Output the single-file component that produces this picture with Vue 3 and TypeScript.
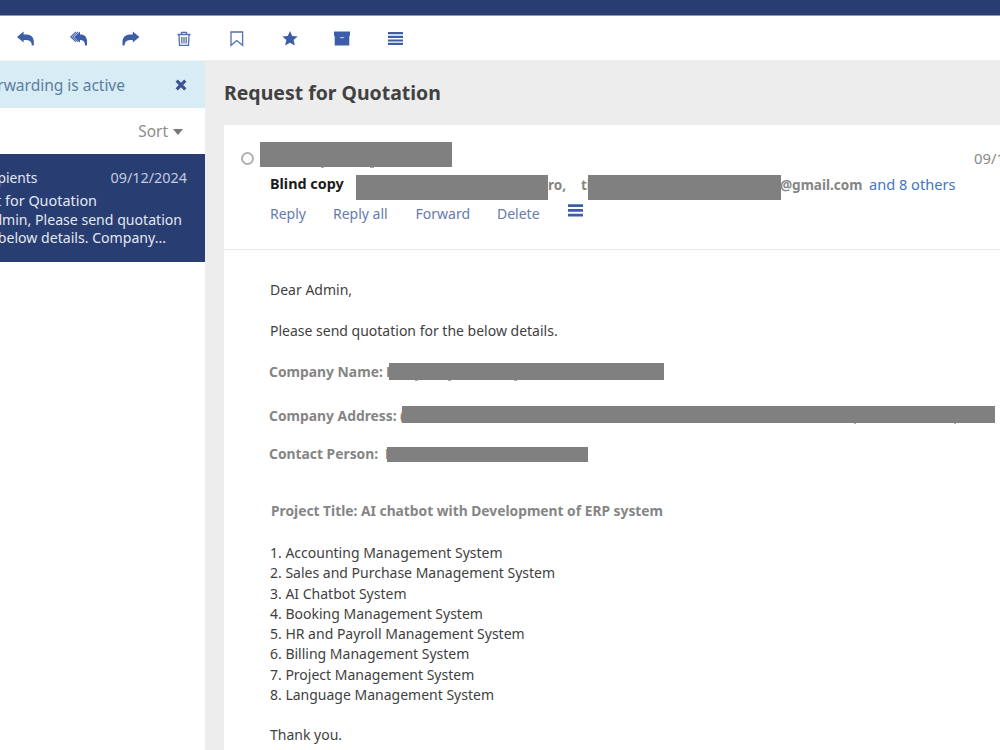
<script setup lang="ts">
interface Mark {
  left: number
  width: number
}

interface Field {
  label: string
  key: string
  peek: string
  marks: Mark[]
}

const fields: Field[] = [
  { label: 'Company Name:', key: 'name', peek: 'K', marks: [{ left: 26, width: 3 }, { left: 59, width: 3 }, { left: 125, width: 3 }] },
  { label: 'Company Address:', key: 'address', peek: '(', marks: [{ left: 452, width: 2 }, { left: 552, width: 2 }] },
  { label: 'Contact Person:', key: 'person', peek: 'D', marks: [] },
]

const systems: string[] = [
  'Accounting Management System',
  'Sales and Purchase Management System',
  'AI Chatbot System',
  'Booking Management System',
  'HR and Payroll Management System',
  'Billing Management System',
  'Project Management System',
  'Language Management System',
]
</script>

<template>
  <div class="mail">
    <div class="topbar"></div>
    <nav class="toolbar">
      <svg class="i-reply" viewBox="0 0 18 16"><path d="M0 5.9 6.6.4v3.1h3.2c5.6.3 7.9 4.3 6.9 11.1h-1.9c.1-3.5-1.8-5.6-5.3-5.7H6.6v2.5z" /></svg>
      <svg class="i-replyall" viewBox="0 0 18 16"><path d="M4.2 5.9 10 .4v3.1h1.2c4.7.3 6.7 4.3 5.7 11.1H15c.1-3.5-1.4-5.6-4.3-5.7H10v2.5z" /><path d="M6 .9.9 5.9 6 10.9M8.2.9 3 5.9l5.2 5" class="line" /></svg>
      <svg class="i-forward" viewBox="0 0 18 16"><path d="M17.4 5.9 10.8.4v3.1H7.6C2 3.8-.3 7.8.7 14.6h1.9c-.1-3.5 1.8-5.6 5.3-5.7h2.9v2.5z" /></svg>
      <svg class="i-trash" viewBox="0 0 14 16"><path class="line" d="M4.5 3V1.3h5V3M.5 3.5h13M2 3.6l.5 10.7h9L12 3.6M4.8 6v6.5M7 6v6.5M9.2 6v6.5" /></svg>
      <svg class="i-bookmark" viewBox="0 0 14 16"><path class="line" d="M1 1h11.6v13.3L6.8 9.6 1 14.3z" /></svg>
      <svg class="i-star" viewBox="0 0 16 16"><path d="m8 0 2.2 5 5.5.5-4.1 3.6 1.3 5.4L8 11.7l-4.9 2.8 1.3-5.4L.3 5.5 5.8 5z" /></svg>
      <svg class="i-archive" viewBox="0 0 16 16"><path d="M0 .5h16v4.2H0zM.7 4.5h14.6v10H.7z" /><path class="slot" d="M5.5 6h5L9.2 7.3H6.8z" /></svg>
      <svg class="i-menu" viewBox="0 0 15 14"><path d="M0 .1h15v2.2H0zM0 3.7h15v2.2H0zM0 7.4h15v2.2H0zM0 10.8h15v2.1H0z" /></svg>
    </nav>
    <div class="body">
      <aside class="list">
        <div class="notice">
          <span class="notice-text">Forwarding is active</span>
          <svg class="close" viewBox="0 0 12 12"><path d="m1.7 1.7 8.6 8.6M10.3 1.7l-8.6 8.6" /></svg>
        </div>
        <div class="sort"><span>Sort</span><i></i></div>
        <article class="item">
          <div class="item-head"><span class="who">Recipients</span><span class="when">09/12/2024</span></div>
          <div class="preview p1">Request for Quotation</div>
          <div class="preview p2">Dear Admin, Please send quotation</div>
          <div class="preview p3">for the below details. Company...</div>
        </article>
      </aside>
      <main class="reader">
        <h1><span>Request for Quotation</span></h1>
        <section class="message">
          <header>
            <div class="from">
              <span class="ring"></span>
              <span class="bar from-bar"><i class="mark" style="left: 61px; width: 3px"></i><i class="mark" style="left: 110px; width: 4px"></i></span>
              <time>09/12/2024</time>
            </div>
            <div class="copy">
              <b class="bcc">Blind copy</b>
              <span class="bar bar-a"></span>
              <b class="grey ro">ro,</b>
              <b class="grey tee">ti</b>
              <span class="bar bar-b"></span>
              <b class="grey domain">@gmail.com</b>
              <a class="others">and 8 others</a>
            </div>
            <div class="actions">
              <a class="a1">Reply</a><a class="a2">Reply all</a><a class="a3">Forward</a><a class="a4">Delete</a>
              <svg viewBox="0 0 15 13"><path d="M0 .2h15v2.7H0zM0 5h15v2.7H0zM0 9.8h15v2.7H0z" /></svg>
            </div>
          </header>
          <div class="content">
            <p class="dear"><span>Dear Admin,</span></p>
            <p class="please"><span>Please send quotation for the below details.</span></p>
            <div v-for="f in fields" :key="f.key" class="field" :class="f.key">
              <b class="label">{{ f.label }}</b>
              <b class="peek">{{ f.peek }}</b>
              <span class="bar"><i v-for="m in f.marks" :key="m.left" class="mark" :style="{ left: m.left + 'px', width: m.width + 'px' }"></i></span>
            </div>
            <p class="title"><b>Project Title: AI chatbot with Development of ERP system</b></p>
            <div class="systems">
              <div v-for="(s, n) in systems" :key="s"><span>{{ n + 1 }}. {{ s }}</span></div>
            </div>
            <p class="thanks"><span>Thank you.</span></p>
          </div>
        </section>
      </main>
    </div>
  </div>
</template>

<style>
body {
  margin: 0;
  overflow: hidden;
}
</style>

<style scoped>
.mail {
  width: 1000px;
  height: 750px;
  overflow: hidden;
  background: #fff;
  display: flex;
  flex-direction: column;
  font-family: "Noto Sans", "Open Sans", sans-serif;
  font-size: 14px;
  color: #333;
  white-space: nowrap;
}
.topbar {
  height: 15px;
  flex: none;
  background: #283e73;
  border-bottom: 1px solid #8d98b1;
}
.toolbar {
  height: 45px;
  flex: none;
  box-sizing: border-box;
  display: flex;
  align-items: flex-start;
  padding: 15px 0 0 17px;
  background: #fff;
  border-bottom: 1px solid #f3f3f3;
}
svg {
  display: block;
  flex: none;
  fill: #3c5da7;
}
.line {
  fill: none;
  stroke: #526fae;
  stroke-width: 1.3;
}
.i-reply, .i-replyall, .i-forward { width: 18px; height: 16px; }
.i-replyall { margin-left: 35px; }
.i-forward { margin-left: 34px; }
.i-trash { width: 14px; height: 16px; margin-left: 37px; }
.i-bookmark { width: 14px; height: 16px; margin-left: 39px; }
.i-star { width: 16px; height: 16px; margin-left: 38px; }
.i-archive { width: 16px; height: 16px; margin-left: 36px; }
.i-menu { width: 15px; height: 14px; margin: 1px 0 0 38px; }
.slot { fill: #b8c7e8; }
.body {
  flex: 1;
  min-height: 0;
  display: flex;
}
.list {
  width: 205px;
  flex: none;
  overflow: hidden;
}
.notice {
  height: 47px;
  box-sizing: border-box;
  padding-top: 1px;
  display: flex;
  align-items: center;
  justify-content: flex-end;
  background: #d8ecf6;
  color: #5b7f9c;
}
.notice-text { font-size: 15.6px; letter-spacing: -0.05px; margin-right: 50px; }
.close { width: 12px; height: 12px; margin-right: 18px; }
.close path { stroke: #3c5294; stroke-width: 3.2; }
.sort {
  height: 46px;
  box-sizing: border-box;
  padding-top: 1px;
  display: flex;
  align-items: center;
  justify-content: flex-end;
  padding-right: 22px;
  color: #8b8b8b;
  font-size: 15.4px;
}
.sort i {
  margin-left: 5px;
  border: 5px solid transparent;
  border-top: 6px solid #777;
  border-bottom: 0;
}
.item {
  height: 108px;
  box-sizing: border-box;
  background: #283e73;
  padding-top: 13px;
  color: #e3e7f1;
}
.item-head {
  display: flex;
  justify-content: flex-end;
  height: 23px;
  line-height: 22px;
}
.who { margin-right: 73px; font-size: 13.8px; }
.when { margin-right: 18px; color: #c2cadd; font-size: 14.4px; }
.preview {
  display: flex;
  justify-content: flex-end;
  height: 18.5px;
  line-height: 21px;
  font-size: 14.1px;
}
.p1 { padding-right: 108px; font-size: 14.4px; }
.p2 { padding-right: 23px; }
.p3 { padding-right: 39px; }
.reader {
  flex: 1;
  min-width: 0;
  margin-top: -1px;
  background: #ededed;
  padding-left: 19px;
  overflow: hidden;
}
h1 {
  margin: 0;
  height: 65px;
  line-height: 65px;
  font-size: 19.45px;
  color: #414141;
}
.message {
  background: #fff;
  height: 626px;
}
header {
  height: 125px;
  box-sizing: border-box;
  border-bottom: 1px solid #e7e7e7;
}
.bar {
  position: relative;
  display: block;
  flex: none;
  background: #808080;
}
.mark {
  position: absolute;
  bottom: -1px;
  height: 1px;
  background: #aaa;
}
.from {
  display: flex;
  height: 50px;
  padding-left: 17px;
}
.ring {
  width: 9px;
  height: 9px;
  border: 2px solid #b0b0b0;
  border-radius: 50%;
  flex: none;
  margin: 27px 0 0 0;
}
.from-bar { width: 192px; height: 25px; margin: 17px 522px 0 6px; }
time { line-height: 67px; font-size: 14.8px; color: #8a8a8a; }
.copy {
  display: flex;
  height: 25px;
  line-height: 17px;
  padding-left: 46px;
}
.bcc { width: 86px; flex: none; color: #1b1b1b; font-size: 14.4px; }
.grey { color: #858585; font-size: 13.5px; line-height: 20px; flex: none; }
.bar-a { width: 192px; height: 25px; }
.bar-b { width: 193px; height: 25px; }
.ro { width: 33px; }
.tee { width: 7px; overflow: hidden; }
.domain { width: 89px; margin-left: -1px; }
.others { color: #3f76cb; font-size: 14.6px; line-height: 19px; }
.actions {
  display: flex;
  padding-left: 46px;
  line-height: 27px;
  color: #667bae;
  font-size: 14px;
}
.a1 { width: 63px; }
.a2 { width: 82.5px; }
.a3 { width: 81.5px; }
.a4 { width: 71px; }
.actions svg { width: 15px; height: 13px; margin-top: 4px; }
.content {
  padding: 30px 0 0 46px;
  font-size: 14px;
  color: #3f3f3f;
}
p { margin: 0; height: 20px; line-height: 20px; }
.please { margin: 20px 0 21px; }
.please span { line-height: 21px; }
.field { display: flex; color: #858585; height: 20px; line-height: 22px; font-size: 13.85px; }
.label { flex: none; margin-left: -1px; }
.peek { width: 4px; flex: none; overflow: hidden; }
.name .label { width: 117px; }
.name .peek { width: 3px; }
.name .bar { width: 275px; height: 17px; margin-top: 2px; }
.address { margin-top: 24px; }
.address .label { width: 131px; }
.address .peek { width: 2px; }
.address .bar { width: 593px; height: 17px; margin-top: 1px; }
.person { margin: 18px 0 38px; }
.person .label { width: 116px; }
.person .peek { width: 2px; }
.person .bar { width: 201px; height: 15px; margin-top: 4px; }
.title { padding-left: 1px; color: #858585; font-size: 13.8px; }
.systems { margin: 22px 0 20px; }
.systems div { height: 20.25px; line-height: 20px; }
</style>
